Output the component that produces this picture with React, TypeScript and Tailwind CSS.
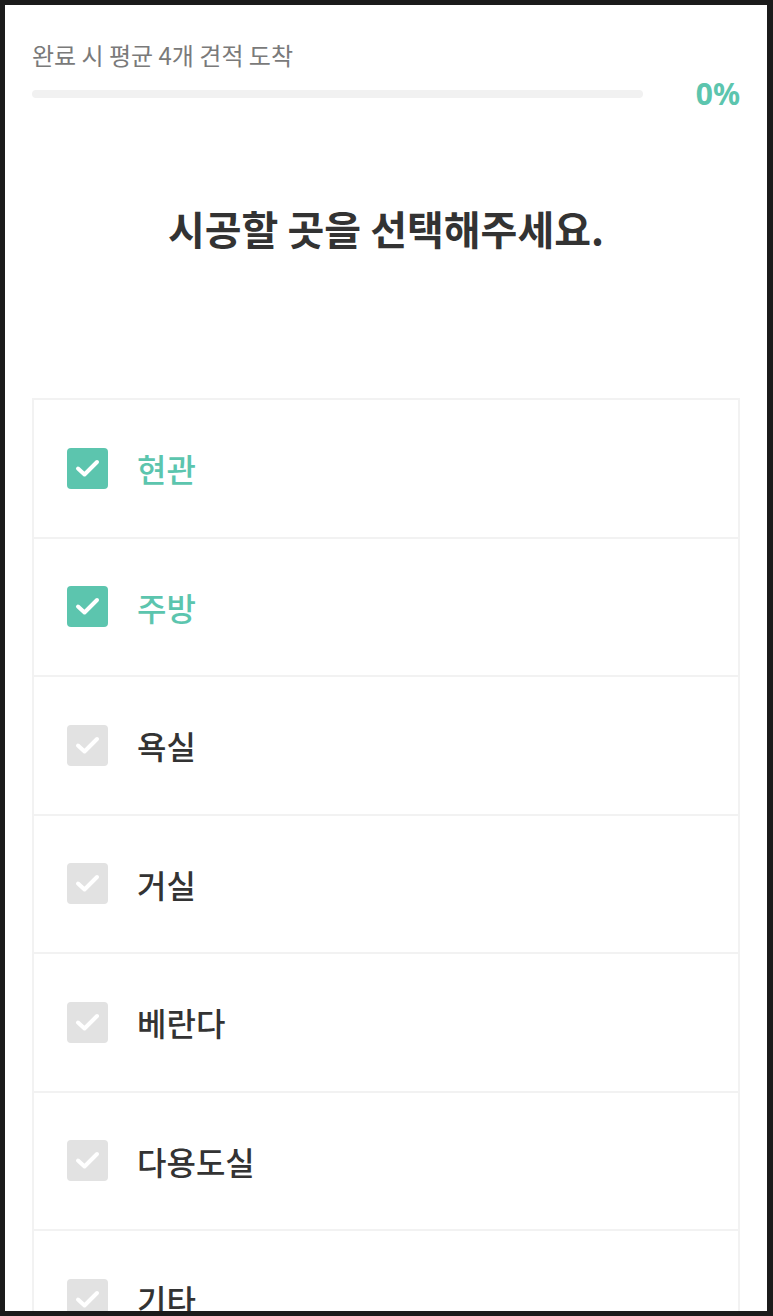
import { useState } from "react";

const AREAS = ["현관", "주방", "욕실", "거실", "베란다", "다용도실", "기타"];

function CheckBox({ checked }: { checked: boolean }) {
    return (
        <div className={`w-[41px] h-[41px] shrink-0 rounded-[4px] flex items-center justify-center ${checked ? "bg-[#5cc5ae]" : "bg-[#e2e2e2]"}`}>
            <svg width="41" height="41" viewBox="0 0 41 41" fill="none">
                <path d="M11 20.5 L17.5 26.5 L30 14" stroke="#ffffff" strokeWidth="4" strokeLinecap="round" strokeLinejoin="round" />
            </svg>
        </div>
    );
}

export default function App() {
    const [selected, setSelected] = useState<string[]>(["현관", "주방"]);

    const toggle = (name: string) => {
        setSelected(prev => prev.includes(name) ? prev.filter(n => n !== name) : [...prev, name]);
    };

    return (
        <div
            className="h-[1316px] w-[773px] bg-[#1b1b1b] p-[5px] pr-[6px] overflow-hidden"
            style={{ fontFamily: '"Noto Sans CJK KR", "Noto Sans", sans-serif' }}
        >
            <div className="h-full bg-white overflow-hidden px-[27px] pt-[35px]">
                {/* progress header */}
                <p className="text-[24px] leading-[30px] text-[#7a7a7a]">완료 시 평균 4개 견적 도착</p>
                <div className="mt-[6px] flex items-center justify-between">
                    <div className="w-[611px] h-[8px] rounded-full bg-[#f1f1f1]" />
                    <span className="text-[30px] leading-[36px] font-bold text-[#5cc5ae]" style={{ fontFamily: '"Noto Sans", sans-serif' }}>0%</span>
                </div>

                <h1 className="mt-[92px] text-center text-[40px] leading-[48px] font-bold text-[#333333]">
                    시공할 곳을 선택해주세요.
                </h1>

                {/* area list */}
                <div className="mt-[146px] border-2 border-[#f2f2f2]">
                    {AREAS.map(name => {
                        const checked = selected.includes(name);
                        return (
                            <button
                                key={name}
                                onClick={() => toggle(name)}
                                className="w-full h-[138.5px] flex items-center gap-[29px] pl-[33px] text-left border-b-2 border-[#f2f2f2]"
                            >
                                <CheckBox checked={checked} />
                                <span className={`text-[32px] leading-[40px] font-medium ${checked ? "text-[#5cc5ae]" : "text-[#333333]"}`}>
                                    {name}
                                </span>
                            </button>
                        );
                    })}
                </div>
            </div>
        </div>
    );
}
